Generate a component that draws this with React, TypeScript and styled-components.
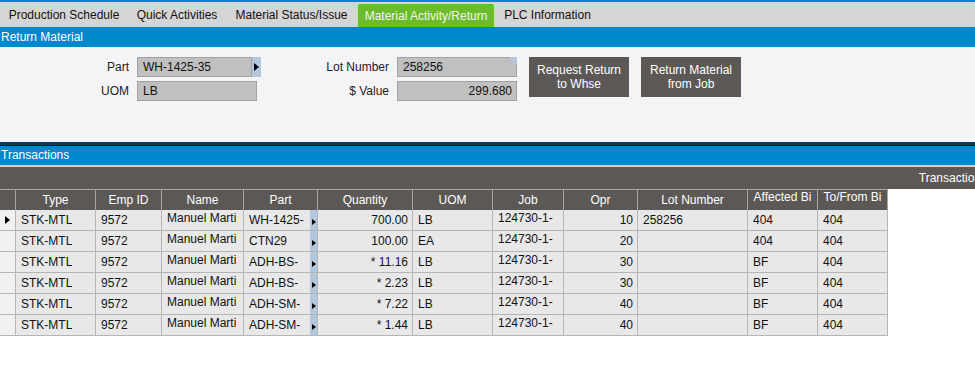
import React from 'react'
import styled, { createGlobalStyle, css } from 'styled-components'

const GlobalStyle = createGlobalStyle`
  html, body {
    margin: 0;
    padding: 0;
    background: #fff;
  }
  body {
    font-family: "Liberation Sans", Arial, sans-serif;
    font-size: 12px;
    color: #111;
    overflow: hidden;
  }
`

type Column = {
    title: string
    width: number
    align?: 'left' | 'right'
    top?: boolean
    headTop?: boolean
    lookup?: boolean
}

const columns: Column[] = [
    { title: 'Type', width: 80 },
    { title: 'Emp ID', width: 66 },
    { title: 'Name', width: 82, top: true },
    { title: 'Part', width: 74, lookup: true },
    { title: 'Quantity', width: 95, align: 'right' },
    { title: 'UOM', width: 80 },
    { title: 'Job', width: 71, top: true },
    { title: 'Opr', width: 74, align: 'right' },
    { title: 'Lot Number', width: 110 },
    { title: 'Affected Bi', width: 70, headTop: true },
    { title: 'To/From Bi', width: 70, headTop: true },
]

const rows = [
    ['STK-MTL', '9572', 'Manuel Marti', 'WH-1425-', '700.00', 'LB', '124730-1-', '10', '258256', '404', '404'],
    ['STK-MTL', '9572', 'Manuel Marti', 'CTN29', '100.00', 'EA', '124730-1-', '20', '', '404', '404'],
    ['STK-MTL', '9572', 'Manuel Marti', 'ADH-BS-', '* 11.16', 'LB', '124730-1-', '30', '', 'BF', '404'],
    ['STK-MTL', '9572', 'Manuel Marti', 'ADH-BS-', '* 2.23', 'LB', '124730-1-', '30', '', 'BF', '404'],
    ['STK-MTL', '9572', 'Manuel Marti', 'ADH-SM-', '* 7.22', 'LB', '124730-1-', '40', '', 'BF', '404'],
    ['STK-MTL', '9572', 'Manuel Marti', 'ADH-SM-', '* 1.44', 'LB', '124730-1-', '40', '', 'BF', '404'],
]

const tabs = [
    { label: 'Production Schedule', width: 128 },
    { label: 'Quick Activities', width: 98 },
    { label: 'Material Status/Issue', width: 131 },
    { label: 'Material Activity/Return', width: 138, active: true },
    { label: 'PLC Information', width: 105 },
]

const App = () => {
    return (
        <>
        <GlobalStyle />
        <Page>
            <TabBar>
                {tabs.map(t => (
                    <Tab key={t.label} $width={t.width} $active={t.active}>{t.label}</Tab>
                ))}
            </TabBar>

            <SectionHeader>Return Material</SectionHeader>
            <FormPanel>
                <FormGrid>
                    <Label>Part</Label>
                    <Field>
                        <InputBox $width={115}>WH-1425-35</InputBox>
                        <LookupButton><Arrow /></LookupButton>
                    </Field>
                    <Label>Lot Number</Label>
                    <Field>
                        <InputBox $width={120} $flag>258256</InputBox>
                    </Field>
                    <ButtonGroup>
                        <ActionButton>Request Return<br />to Whse</ActionButton>
                        <ActionButton>Return Material<br />from Job</ActionButton>
                    </ButtonGroup>

                    <Label>UOM</Label>
                    <Field>
                        <InputBox $width={120}>LB</InputBox>
                    </Field>
                    <Label>$ Value</Label>
                    <Field>
                        <InputBox $width={120} $right>299.680</InputBox>
                    </Field>
                </FormGrid>
            </FormPanel>

            <SectionHeader $divider>Transactions</SectionHeader>
            <GridArea>
                <GridTitle>Transactions</GridTitle>
                <Table>
                    <Row>
                        <HeadCell $width={16} />
                        {columns.map(c => (
                            <HeadCell key={c.title} $width={c.width} $top={c.headTop}>{c.title}</HeadCell>
                        ))}
                    </Row>
                    {rows.map((r, i) => (
                        <Row key={i}>
                            <Indicator>{i === 0 && <Arrow />}</Indicator>
                            {columns.map((c, j) => (
                                <Cell key={c.title} $width={c.width} $align={c.align} $top={c.top}>
                                    <CellText>{r[j]}</CellText>
                                    {c.lookup && <CellLookup><Arrow $small /></CellLookup>}
                                </Cell>
                            ))}
                        </Row>
                    ))}
                </Table>
            </GridArea>
        </Page>
        </>
    )
}

export default App

const Page = styled.div`
    width: 100%;
    min-height: 374px;
    background: #fff;
`

const TabBar = styled.div`
    display: flex;
    align-items: flex-end;
    height: 25px;
    border-top: 2px solid #0088cc;
    background: #d5d5d5;
`

const Tab = styled.div<{ $width: number; $active?: boolean }>`
    box-sizing: border-box;
    width: ${p => p.$width}px;
    height: 24px;
    display: flex;
    align-items: center;
    justify-content: center;
    white-space: nowrap;
    font-size: 12px;
    color: #111;
    ${p => p.$active && css`
        background: #6bbb2a;
        color: #f3f6ee;
        border: 1px solid #c6e6a6;
        border-bottom: none;
        border-radius: 3px 3px 0 0;
        padding-top: 1px;
    `}
`

const SectionHeader = styled.div<{ $divider?: boolean }>`
    height: 20px;
    line-height: 20px;
    padding-left: 1px;
    background: #0088cf;
    color: #fff;
    font-size: 12px;
    ${p => p.$divider && css`
        border-top: 3px solid #0d3b58;
        box-shadow: inset 0 1px 0 #0a1a26;
    `}
`

const FormPanel = styled.div`
    box-sizing: border-box;
    height: 95px;
    padding-top: 10px;
    background: #f4f4f6;
`

const FormGrid = styled.div`
    display: grid;
    grid-template-columns: 129px 124px 120px 120px auto;
    grid-template-rows: 20px 20px;
    column-gap: 8px;
    row-gap: 4px;
`

const Label = styled.div`
    text-align: right;
    line-height: 20px;
    color: #1b1b28;
    white-space: nowrap;
`

const Field = styled.div`
    display: flex;
`

const InputBox = styled.div<{ $width: number; $right?: boolean; $flag?: boolean }>`
    position: relative;
    box-sizing: border-box;
    width: ${p => p.$width}px;
    height: 20px;
    line-height: 18px;
    padding: 0 4px 0 5px;
    background: #c0c0c0;
    border: 1px solid #a2a2a2;
    color: #111;
    text-align: ${p => (p.$right ? 'right' : 'left')};
    ${p => p.$flag && css`
        &::after {
            content: '';
            position: absolute;
            top: -1px;
            right: -1px;
            border-top: 8px solid #b3c7df;
            border-left: 8px solid transparent;
        }
    `}
`

const LookupButton = styled.div`
    width: 9px;
    height: 20px;
    background: #b3c7df;
    display: flex;
    align-items: center;
    justify-content: center;
`

const Arrow = styled.span<{ $small?: boolean }>`
    display: block;
    width: 0;
    height: 0;
    border-left: ${p => (p.$small ? 4 : 5)}px solid #000;
    border-top: ${p => (p.$small ? 3 : 4)}px solid transparent;
    border-bottom: ${p => (p.$small ? 3 : 4)}px solid transparent;
`

const ButtonGroup = styled.div`
    grid-column: 5;
    grid-row: 1 / span 2;
    display: flex;
    gap: 12px;
    padding-left: 4px;
`

const ActionButton = styled.div`
    width: 100px;
    height: 40px;
    display: flex;
    align-items: center;
    justify-content: center;
    text-align: center;
    line-height: 14px;
    background: #5b5855;
    color: #fff;
    font-size: 12px;
`

const GridArea = styled.div`
    overflow: hidden;
    border-top: 2px solid #d2d2d2;
`

const GridTitle = styled.div`
    height: 22px;
    line-height: 22px;
    margin-right: -16px;
    padding-right: 4px;
    background: #5b5855;
    color: #fff;
    text-align: right;
    white-space: nowrap;
`

const Table = styled.div`
    display: flex;
    flex-direction: column;
    width: fit-content;
`

const Row = styled.div`
    display: flex;
`

const HeadCell = styled.div<{ $width: number; $top?: boolean }>`
    box-sizing: border-box;
    width: ${p => p.$width}px;
    height: 21px;
    line-height: ${p => (p.$top ? '15px' : '20px')};
    border-top: 1px solid #a7a7a7;
    border-right: 1px solid #a7a7a7;
    background: #5b5855;
    color: #fff;
    text-align: center;
    white-space: nowrap;
    overflow: hidden;
`

const Indicator = styled.div`
    box-sizing: border-box;
    width: 16px;
    height: 21px;
    padding-left: 5px;
    display: flex;
    align-items: center;
    background: #f0f0f0;
    border-right: 1px solid #b5b5b5;
    border-bottom: 1px solid #b5b5b5;
`

const Cell = styled.div<{ $width: number; $align?: 'left' | 'right'; $top?: boolean }>`
    position: relative;
    box-sizing: border-box;
    width: ${p => p.$width}px;
    height: 21px;
    display: flex;
    justify-content: ${p => (p.$align === 'right' ? 'flex-end' : 'flex-start')};
    padding: ${p => (p.$align === 'right' ? '0 4px 0 0' : '0 0 0 5px')};
    background: #e8e8e8;
    border-right: 1px solid #b5b5b5;
    border-bottom: 1px solid #b5b5b5;
    line-height: ${p => (p.$top ? '16px' : '20px')};
    color: #111;
    white-space: nowrap;
    overflow: hidden;
`

const CellText = styled.span`
    overflow: hidden;
`

const CellLookup = styled.div`
    position: absolute;
    top: 0;
    right: 0;
    bottom: -1px;
    width: 7px;
    background: #b3c7df;
    display: flex;
    align-items: center;
    justify-content: center;
    padding-top: 3px;
    box-sizing: border-box;
`
